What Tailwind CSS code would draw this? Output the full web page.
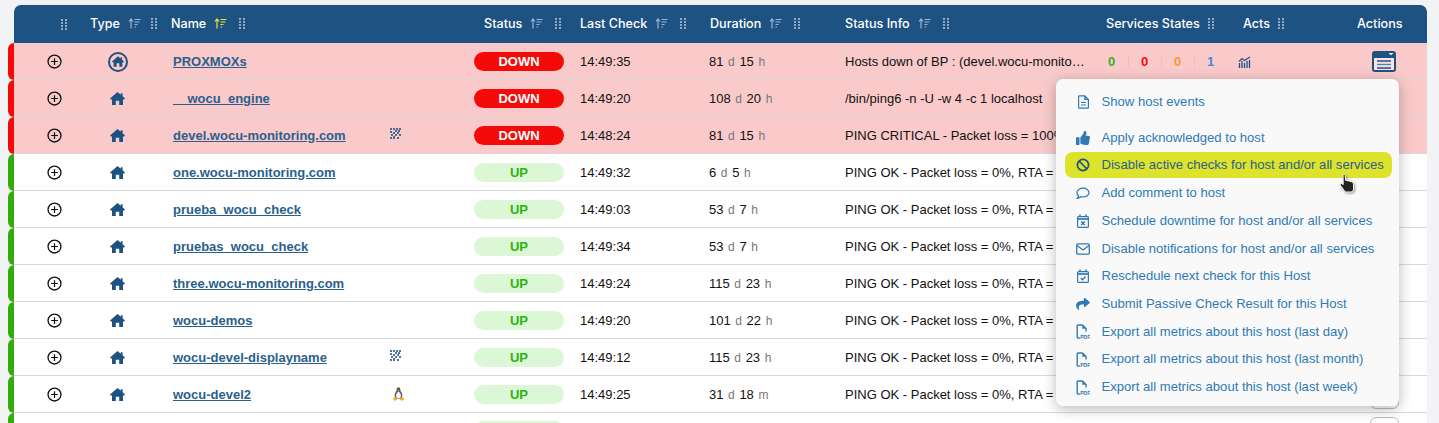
<!DOCTYPE html>
<html lang="en">
<head>
    <meta charset="UTF-8">
    <title>Hosts</title>
    <script src="https://cdn.jsdelivr.net/npm/@tailwindcss/browser@4"></script>
</head>
<body class="bg-[#f2f3f5] font-['Liberation_Sans',sans-serif] text-[13px] text-[#111] overflow-hidden h-[423px]">

    <svg class="hidden">
        <symbol id="home" viewBox="0 0 15 13"><path fill="currentColor" d="M7.500 0L10.800 2.800V1.200H12.600V4.300L15 6.400 14.200 7.400H13V13H9.200V8.800H5.800V13H2V7.400H.8L0 6.400z"/></symbol>
        <symbol id="grip" viewBox="0 0 7 11"><g fill="currentColor"><rect x="0" y="0" width="2" height="2"/><rect x="4" y="0" width="2" height="2"/><rect x="0" y="3" width="2" height="2"/><rect x="4" y="3" width="2" height="2"/><rect x="0" y="6" width="2" height="2"/><rect x="4" y="6" width="2" height="2"/><rect x="0" y="9" width="2" height="2"/><rect x="4" y="9" width="2" height="2"/></g></symbol>
        <symbol id="sort" viewBox="0 0 13 11"><path d="M3 10.500V1.500M1 3.500L3 1L5 3.500" fill="none" stroke="currentColor" stroke-width="1.200"/><path d="M6.500 1.500h6M6.500 4h5M6.500 6.500h3M6.500 9h1.600" fill="none" stroke="currentColor" stroke-width="1.200"/></symbol>
        <symbol id="plus" viewBox="0 0 16 16"><circle cx="8" cy="8" r="6.900" fill="none" stroke="currentColor" stroke-width="1.400"/><path d="M8 4.400v7.200M4.400 8h7.200" stroke="currentColor" stroke-width="1.300"/></symbol>
        <symbol id="pdf" viewBox="0 0 14 15"><path d="M6.500 1H2.200a1 1 0 0 0-1 1v11a1 1 0 0 0 1 1h1.600M6.500 1l3.500 3.500v3" fill="none" stroke="currentColor" stroke-width="1.400"/><path d="M6.300 1v3.700H10z" fill="currentColor"/><text x="4.200" y="14.600" font-size="5" font-weight="700" font-family="Liberation Sans" fill="currentColor">PDF</text></symbol>
        <symbol id="bp" viewBox="0 0 11 11"><g fill="currentColor"><rect x="0" y="0" width="2" height="2"/><rect x="3" y="0" width="2" height="2"/><rect x="6" y="0" width="2" height="2"/><rect x="9" y="0" width="2" height="2"/><rect x="5" y="2" width="2" height="2"/><rect x="8" y="2" width="2" height="2"/><rect x="0" y="3" width="2" height="2"/><rect x="3" y="4" width="2" height="2"/><rect x="7" y="4" width="2" height="2"/><rect x="1" y="6" width="2" height="2"/><rect x="5" y="6" width="2" height="2"/><rect x="9" y="6" width="2" height="2"/><rect x="0" y="9" width="2" height="2"/><rect x="3" y="8" width="2" height="3"/><rect x="7" y="9" width="2" height="2"/></g></symbol>
    </svg>

    <div class="relative pt-[5px] pl-[8px] w-[1427px] h-[423px] overflow-hidden">

        <!-- Table header -->
        <div class="ml-[6px] h-[38px] bg-[#1e5283] rounded-t-[7px] flex items-center text-white font-['Inter',sans-serif] font-medium text-[12.6px] relative">
            <div class="w-[54px] shrink-0 flex justify-end"><svg class="w-[7px] h-[11px] text-[#8fa9c2]"><use href="#grip"/></svg></div>
            <div class="ml-[22px] w-[81px] shrink-0 flex items-center">Type<svg class="ml-[8px] w-[13px] h-[11px] text-[#9db5cc]"><use href="#sort"/></svg><svg class="ml-[10px] w-[7px] h-[11px] text-[#8fa9c2]"><use href="#grip"/></svg></div>
            <div class="w-[313px] shrink-0 flex items-center">Name<svg class="ml-[8px] w-[13px] h-[11px] text-[#e4ea2c]"><use href="#sort"/></svg><svg class="ml-[12px] w-[7px] h-[11px] text-[#8fa9c2]"><use href="#grip"/></svg></div>
            <div class="w-[96px] shrink-0 flex items-center">Status<svg class="ml-[8px] w-[13px] h-[11px] text-[#9db5cc]"><use href="#sort"/></svg><svg class="ml-[12px] w-[7px] h-[11px] text-[#8fa9c2]"><use href="#grip"/></svg></div>
            <div class="w-[130px] shrink-0 flex items-center">Last Check<svg class="ml-[8px] w-[13px] h-[11px] text-[#9db5cc]"><use href="#sort"/></svg><svg class="ml-[12px] w-[7px] h-[11px] text-[#8fa9c2]"><use href="#grip"/></svg></div>
            <div class="w-[135px] shrink-0 flex items-center">Duration<svg class="ml-[8px] w-[13px] h-[11px] text-[#9db5cc]"><use href="#sort"/></svg><svg class="ml-[12px] w-[7px] h-[11px] text-[#8fa9c2]"><use href="#grip"/></svg></div>
            <div class="w-[261px] shrink-0 flex items-center">Status Info<svg class="ml-[8px] w-[13px] h-[11px] text-[#9db5cc]"><use href="#sort"/></svg><svg class="ml-[12px] w-[7px] h-[11px] text-[#8fa9c2]"><use href="#grip"/></svg></div>
            <div class="w-[137px] shrink-0 flex items-center">Services States<svg class="ml-[8px] w-[7px] h-[11px] text-[#8fa9c2]"><use href="#grip"/></svg></div>
            <div class="w-[114px] shrink-0 flex items-center">Acts<svg class="ml-[8px] w-[7px] h-[11px] text-[#8fa9c2]"><use href="#grip"/></svg></div>
            <div>Actions</div>
        </div>

        <!-- Rows -->
        <div id="rows"></div>

        <!-- Last row, cut by the window -->
        <div class="h-[10px] flex items-stretch overflow-hidden">
            <div class="w-[6px] shrink-0 rounded-tl-[6px] bg-[#31ad0a]"></div>
            <div class="flex-1 bg-white relative">
                <div class="absolute left-[460px] top-[8px] w-[90px] h-[19px] rounded-full bg-[#dcf7d5]"></div>
                <div class="absolute left-[1356px] top-[4px] w-[29px] h-[29px] border border-[#bbb] rounded-[6px] bg-white"></div>
            </div>
        </div>

        <!-- Actions dropdown -->
        <div class="absolute left-[1056px] top-[79px] w-[343px] h-[327px] bg-[#f9f9f9] rounded-[7px] shadow-[0_3px_14px_rgba(0,0,0,0.28)] pt-[9px] pl-[9px] pr-[7px] text-[#2f7ab5] text-[13.1px]">
            <div class="h-[28px] flex items-center pl-[13px]">
                <svg class="w-[11px] h-[14px] mr-[12.500px]" viewBox="0 0 11 14" fill="none" stroke="currentColor" stroke-width="1.200"><path d="M6.800 .8H1.400a.8.800 0 0 0-.8.800v10.800a.8.800 0 0 0 .8.800h8.200a.8.800 0 0 0 .8-.8V4.400zM6.800 .8v3.600h3.600M3 7.500h5M3 10h5"/></svg>
                <span>Show host events</span>
            </div>
            <div class="h-[8px]"></div>
            <div class="h-[28px] flex items-center pl-[11px]">
                <svg class="w-[14px] h-[14px] mr-[11.500px]" viewBox="0 0 512 512"><path fill="currentColor" d="M104 224H24c-13.300 0-24 10.700-24 24v240c0 13.300 10.700 24 24 24h80c13.300 0 24-10.700 24-24V248c0-13.300-10.700-24-24-24zM384 81.500c0 42.400-26 66.200-33.300 94.500h101.700c33.400 0 59.400 27.700 59.600 58 .1 17.900-7.500 37.200-19.400 49.200l-.1.100c9.800 23.300 8.200 56-9.300 79.400 8.700 25.900-.1 57.700-16.400 74.800 4.300 17.600 2.200 32.600-6.100 44.600C440.200 511.600 389.600 512 346.800 512h-2.800c-48.300 0-87.800-17.600-119.600-31.700-16-7.100-36.800-15.900-52.700-16.200-6.500-.1-11.800-5.500-11.800-12V238.300c0-3.200 1.300-6.300 3.600-8.500 39.600-39.100 56.600-80.500 89.100-113 14.800-14.800 20.200-37.200 25.400-58.900C282.500 39.300 291.800 0 312 0c24 0 72 8 72 81.500z"/></svg>
                <span>Apply acknowledged to host</span>
            </div>
            <div class="h-[26px] flex items-center pl-[11px] bg-[#dde32a] rounded-[8px] text-[#2b5f8c]">
                <svg class="w-[14px] h-[14px] mr-[11.500px] text-[#1e5283]" viewBox="0 0 14 14" fill="none" stroke="currentColor" stroke-width="1.700"><circle cx="7" cy="7" r="5.600"/><path d="M3 3l8 8"/></svg>
                <span>Disable active checks for host and/or all services</span>
            </div>
            <div class="h-[28px] mt-[1px] flex items-center pl-[11px]">
                <svg class="w-[14px] h-[13px] mr-[11.500px]" viewBox="0 0 14 13" fill="none" stroke="currentColor" stroke-width="1.200"><path d="M7 1.200c3.300 0 6 1.900 6 4.400S10.300 10 7 10c-.8 0-1.500-.1-2.200-.3-.8.700-2 1.600-3.600 1.700.6-.7 1.200-1.700 1.300-2.500C1.600 8.100 1 6.900 1 5.600c0-2.500 2.700-4.400 6-4.400z"/></svg>
                <span>Add comment to host</span>
            </div>
            <div class="h-[28px] flex items-center pl-[11px]">
                <svg class="w-[14px] h-[14px] mr-[11.500px]" viewBox="0 0 14 14" fill="none" stroke="currentColor" stroke-width="1.200"><rect x="1.600" y="2.600" width="10.800" height="10.800" rx="1"/><path d="M1.600 5h10.800" stroke-width="1.700"/><path d="M4 .6v2.400M10 .6v2.400" stroke-width="1.500"/><path d="M5.200 7.400l3.600 3.600M8.800 7.400l-3.600 3.600" stroke-width="1.400"/></svg>
                <span>Schedule downtime for host and/or all services</span>
            </div>
            <div class="h-[27px] flex items-center pl-[11px]">
                <svg class="w-[14px] h-[12px] mr-[11.500px]" viewBox="0 0 14 12" fill="none" stroke="currentColor" stroke-width="1.300"><rect x=".7" y=".9" width="12.600" height="10.200" rx="1.200"/><path d="M1 2.500L7 7l6-4.500"/></svg>
                <span>Disable notifications for host and/or all services</span>
            </div>
            <div class="h-[28px] flex items-center pl-[11px]">
                <svg class="w-[14px] h-[14px] mr-[11.500px]" viewBox="0 0 14 14" fill="none" stroke="currentColor" stroke-width="1.200"><rect x="1.600" y="2.600" width="10.800" height="10.800" rx="1"/><path d="M1.600 5h10.800" stroke-width="1.700"/><path d="M4 .6v2.400M10 .6v2.400" stroke-width="1.500"/><path d="M4.700 9l1.800 1.800 3-3.300" stroke-width="1.400"/></svg>
                <span>Reschedule next check for this Host</span>
            </div>
            <div class="h-[28px] flex items-center pl-[11px]">
                <svg class="w-[14px] h-[12px] mr-[11.500px]" viewBox="0 0 512 448"><path fill="currentColor" d="M503.700 153.400l-176-152C312.300-11.800 288 -1 288 20v80.100C127.400 101.900 0 134.100 0 286.400c0 61.500 39.600 122.400 83.400 154.200 13.700 9.900 33.100-2.500 28.100-18.600C66 272.400 132.900 233.800 288 231.600V320c0 21 24.300 31.800 39.700 18.600l176-152c11.100-9.600 11.100-23.700 0-33.200z"/></svg>
                <span>Submit Passive Check Result for this Host</span>
            </div>
            <div class="h-[27px] flex items-center pl-[11px]">
                <svg class="w-[14px] h-[15px] mr-[11.500px]"><use href="#pdf"/></svg>
                <span>Export all metrics about this host (last day)</span>
            </div>
            <div class="h-[28px] flex items-center pl-[11px]">
                <svg class="w-[14px] h-[15px] mr-[11.500px]"><use href="#pdf"/></svg>
                <span>Export all metrics about this host (last month)</span>
            </div>
            <div class="h-[28px] flex items-center pl-[11px]">
                <svg class="w-[14px] h-[15px] mr-[11.500px]"><use href="#pdf"/></svg>
                <span>Export all metrics about this host (last week)</span>
            </div>
        </div>

        <!-- Mouse cursor -->
        <svg class="absolute left-[1339px] top-[173px] w-[17px] h-[20px] drop-shadow-[1px_1px_1px_rgba(0,0,0,0.4)]" viewBox="0 0 17 20"><path d="M4 1.500c.8-.7 2-.4 2.200.8l.4 5 4.500.9c2.200.5 3.400 1.300 3.400 3.400v4.500c0 1.500-1 2.900-2.600 2.900H7.500c-1 0-1.700-.5-2.300-1.300L1.600 12.600c-.9-1.300.6-2.800 1.900-1.700l.7.700z" fill="#222" stroke="#fff" stroke-width="1"/></svg>
    </div>

    <script>
        const hosts = [
            { name: 'PROXMOXs', bp: true, state: 'DOWN', check: '14:49:35', dur: ['81', 'd', '15', 'h'], info: 'Hosts down of BP : (devel.wocu-monito…', states: true },
            { name: '__wocu_engine', state: 'DOWN', check: '14:49:20', dur: ['108', 'd', '20', 'h'], info: '/bin/ping6 -n -U -w 4 -c 1 localhost' },
            { name: 'devel.wocu-monitoring.com', os: 'bp', state: 'DOWN', check: '14:48:24', dur: ['81', 'd', '15', 'h'], info: 'PING CRITICAL - Packet loss = 100%' },
            { name: 'one.wocu-monitoring.com', state: 'UP', check: '14:49:32', dur: ['6', 'd', '5', 'h'], info: 'PING OK - Packet loss = 0%, RTA = 0.5 ms' },
            { name: 'prueba_wocu_check', state: 'UP', check: '14:49:03', dur: ['53', 'd', '7', 'h'], info: 'PING OK - Packet loss = 0%, RTA = 0.5 ms' },
            { name: 'pruebas_wocu_check', state: 'UP', check: '14:49:34', dur: ['53', 'd', '7', 'h'], info: 'PING OK - Packet loss = 0%, RTA = 0.5 ms' },
            { name: 'three.wocu-monitoring.com', state: 'UP', check: '14:49:24', dur: ['115', 'd', '23', 'h'], info: 'PING OK - Packet loss = 0%, RTA = 0.5 ms' },
            { name: 'wocu-demos', state: 'UP', check: '14:49:20', dur: ['101', 'd', '22', 'h'], info: 'PING OK - Packet loss = 0%, RTA = 0.5 ms' },
            { name: 'wocu-devel-displayname', os: 'bp', state: 'UP', check: '14:49:12', dur: ['115', 'd', '23', 'h'], info: 'PING OK - Packet loss = 0%, RTA = 0.5 ms' },
            { name: 'wocu-devel2', os: 'linux', state: 'UP', check: '14:49:25', dur: ['31', 'd', '18', 'm'], info: 'PING OK - Packet loss = 0%, RTA = 0.5 ms' }
        ];

        // Tux: grey head and back, white belly, wide yellow feet
        const tux = `<svg class="w-[11px] h-[14px] ml-[5px] -mt-[1px]" viewBox="0 0 11 14"><path d="M5.500.2C4.100.2 3.700 1.400 3.700 2.800c0 1.400-2.100 3.200-2.100 5.700 0 1.900 1.400 3.500 3.900 3.500s3.900-1.600 3.900-3.500c0-2.500-2.100-4.300-2.100-5.700C7.300 1.400 6.900.2 5.500.2z" fill="#5a5a5a"/><path d="M5.500 4.400c-1 .6-2.500 2.500-2.500 4.400 0 1.500 1.100 2.800 2.500 2.800S8 10.300 8 8.800c0-1.900-1.500-3.800-2.500-4.400z" fill="#fafafa"/><path d="M1.400 10l2.300 1.200.5 1.800-3 .8L0 11.800zM9.600 10L7.300 11.200l-.5 1.800 3 .8 1.200-2zM4.600 3h1.800l-.9 1z" fill="#f2b41e"/></svg>`;

        function stateCounts() {
            return `<div class="w-[130px] shrink-0 flex items-center font-bold text-[13px] h-[12px]">
                <span class="w-[20px] text-[#3fae1a]">0</span><span class="w-[1px] h-[12px] bg-[#efc0c0]"></span>
                <span class="w-[32px] pl-[12px] text-[#f50a0a]">0</span><span class="w-[1px] h-[12px] bg-[#efc0c0]"></span>
                <span class="w-[32px] pl-[12px] text-[#f59a2c]">0</span><span class="w-[1px] h-[12px] bg-[#efc0c0]"></span>
                <span class="pl-[12px] text-[#4a86e0]">1</span>
            </div>`;
        }

        document.getElementById('rows').innerHTML = hosts.map(h => {
            const down = h.state === 'DOWN';
            const badge = down ? 'bg-[#f50a0a] text-white' : 'bg-[#dcf7d5] text-[#2db30d]';
            const os = h.os === 'bp' ? `<svg class="w-[11px] h-[11px] ml-[2px] text-[#1e5283] opacity-80 -mt-[5px]"><use href="#bp"/></svg>` : h.os === 'linux' ? tux : '';
            const home = `<svg class="w-[15px] h-[13px]"><use href="#home"/></svg>`;
            return `<div class="h-[37px] flex items-stretch">
                <div class="w-[6px] shrink-0 rounded-l-[6px] ${down ? 'bg-[#f50a0a]' : 'bg-[#31ad0a]'}"></div>
                <div class="flex-1 flex items-center pt-[1px] border-b border-[#d9d9d9] ${down ? 'bg-[#facaca]' : 'bg-white'}">
                    <div class="w-[80px] shrink-0 flex justify-end"><svg class="w-[15px] h-[15px] text-[#111] mr-[32px]"><use href="#plus"/></svg></div>
                    <div class="w-[47px] shrink-0 flex justify-center text-[#1e5283]">${h.bp ? `<span class="w-[20px] h-[20px] rounded-full border-2 border-[#1e5283] flex items-center justify-center"><svg class="w-[12px] h-[11px]"><use href="#home"/></svg></span>` : home}</div>
                    <div class="w-[215px] ml-[32px] shrink-0 font-bold text-[#2b5f8c] underline text-[13px]">${h.name}</div>
                    <div class="w-[86px] shrink-0 flex">${os}</div>
                    <div class="w-[106px] shrink-0"><div class="w-[90px] h-[19px] rounded-full flex items-center justify-center font-bold ${badge}">${h.state}</div></div>
                    <div class="w-[130px] shrink-0">${h.check}</div>
                    <div class="w-[135px] shrink-0 -ml-[1px] mr-[1px]">${h.dur[0]} <span class="text-[#777] text-[12px] mx-[1px]">${h.dur[1]}</span> ${h.dur[2]} <span class="text-[#777] text-[12px] mx-[1px]">${h.dur[3]}</span></div>
                    <div class="w-[263px] shrink-0 whitespace-nowrap overflow-hidden">${h.info}</div>
                    ${h.states ? stateCounts() : '<div class="w-[130px] shrink-0"></div>'}
                    <div class="w-[134px] shrink-0">${h.states ? `<svg class="w-[13px] h-[12px] text-[#1e5283]" viewBox="0 0 13 12" fill="none" stroke="currentColor"><path d="M1 5.500L4 2.500l2.500 2L12 1" stroke-width="1.200"/><path d="M1.500 7v5M4 5v7M6.500 7v5M9 5v7M11.500 4v8" stroke-width="1.300"/></svg>` : ''}</div>
                    ${h.states
                        ? `<svg class="w-[24px] h-[21px]" viewBox="0 0 24 21"><rect x="0" y="0" width="24" height="21" rx="3" fill="#1e5283"/><rect x="2" y="7" width="20" height="12" fill="#fbe3e3"/><path d="M5 10h14M5 17h14" stroke="#1e5283" stroke-width="1.400"/><path d="M5 13.500h14" stroke="#4a84b5" stroke-width="1.400"/><path d="M16.500 2h5l-2.500 2.200z" fill="#fff"/></svg>`
                        : `<div class="w-[29px] h-[29px] border border-[#bbb] rounded-[6px] bg-white -ml-[2px]"></div>`}
                </div>
            </div>`;
        }).join('');
    </script>
</body>
</html>
